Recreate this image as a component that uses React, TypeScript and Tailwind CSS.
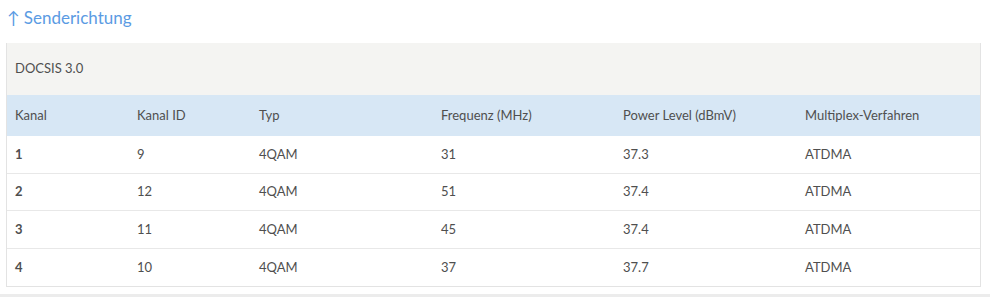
const rows = [
  { kanal: "1", id: "9", typ: "4QAM", freq: "31", power: "37.3", mux: "ATDMA" },
  { kanal: "2", id: "12", typ: "4QAM", freq: "51", power: "37.4", mux: "ATDMA" },
  { kanal: "3", id: "11", typ: "4QAM", freq: "45", power: "37.4", mux: "ATDMA" },
  { kanal: "4", id: "10", typ: "4QAM", freq: "37", power: "37.7", mux: "ATDMA" }
];

const cols = "grid grid-cols-[122px_122px_182px_182px_182px_1fr] items-center pl-[8px] pr-2";

export default function App() {
  return (
    <div className="h-[300px] w-[990px] bg-white font-['Lato','Liberation_Sans',sans-serif] text-[13px] text-[#4f4f4f]">
      <div className="pt-[6px] pl-[7px]">
        <h2 className="flex h-[24px] items-center gap-[4px] text-[17px] text-[#5b9be3]">
          <span>↑</span>
          <span>Senderichtung</span>
        </h2>
      </div>
      <div className="ml-[6px] mt-[13px] w-[975px] border border-t-0 border-[#e3e3e3]">
        <div className="flex h-[52px] items-center bg-[#f4f4f2] pl-[8px]">DOCSIS 3.0</div>
        <div className={`${cols} h-[41px] bg-[#d7e7f5]`}>
          <span>Kanal</span>
          <span>Kanal ID</span>
          <span>Typ</span>
          <span>Frequenz (MHz)</span>
          <span>Power Level (dBmV)</span>
          <span>Multiplex-Verfahren</span>
        </div>
        {rows.map((r, i) => (
          <div
            key={r.kanal}
            className={`${cols} h-[37.5px] ${i < rows.length - 1 ? "border-b border-[#e8e8e8]" : ""}`}
          >
            <span className="font-bold">{r.kanal}</span>
            <span>{r.id}</span>
            <span>{r.typ}</span>
            <span>{r.freq}</span>
            <span>{r.power}</span>
            <span>{r.mux}</span>
          </div>
        ))}
      </div>
      <div className="mt-[7px] h-[3px] w-full bg-[#ececec]" />
    </div>
  );
}
